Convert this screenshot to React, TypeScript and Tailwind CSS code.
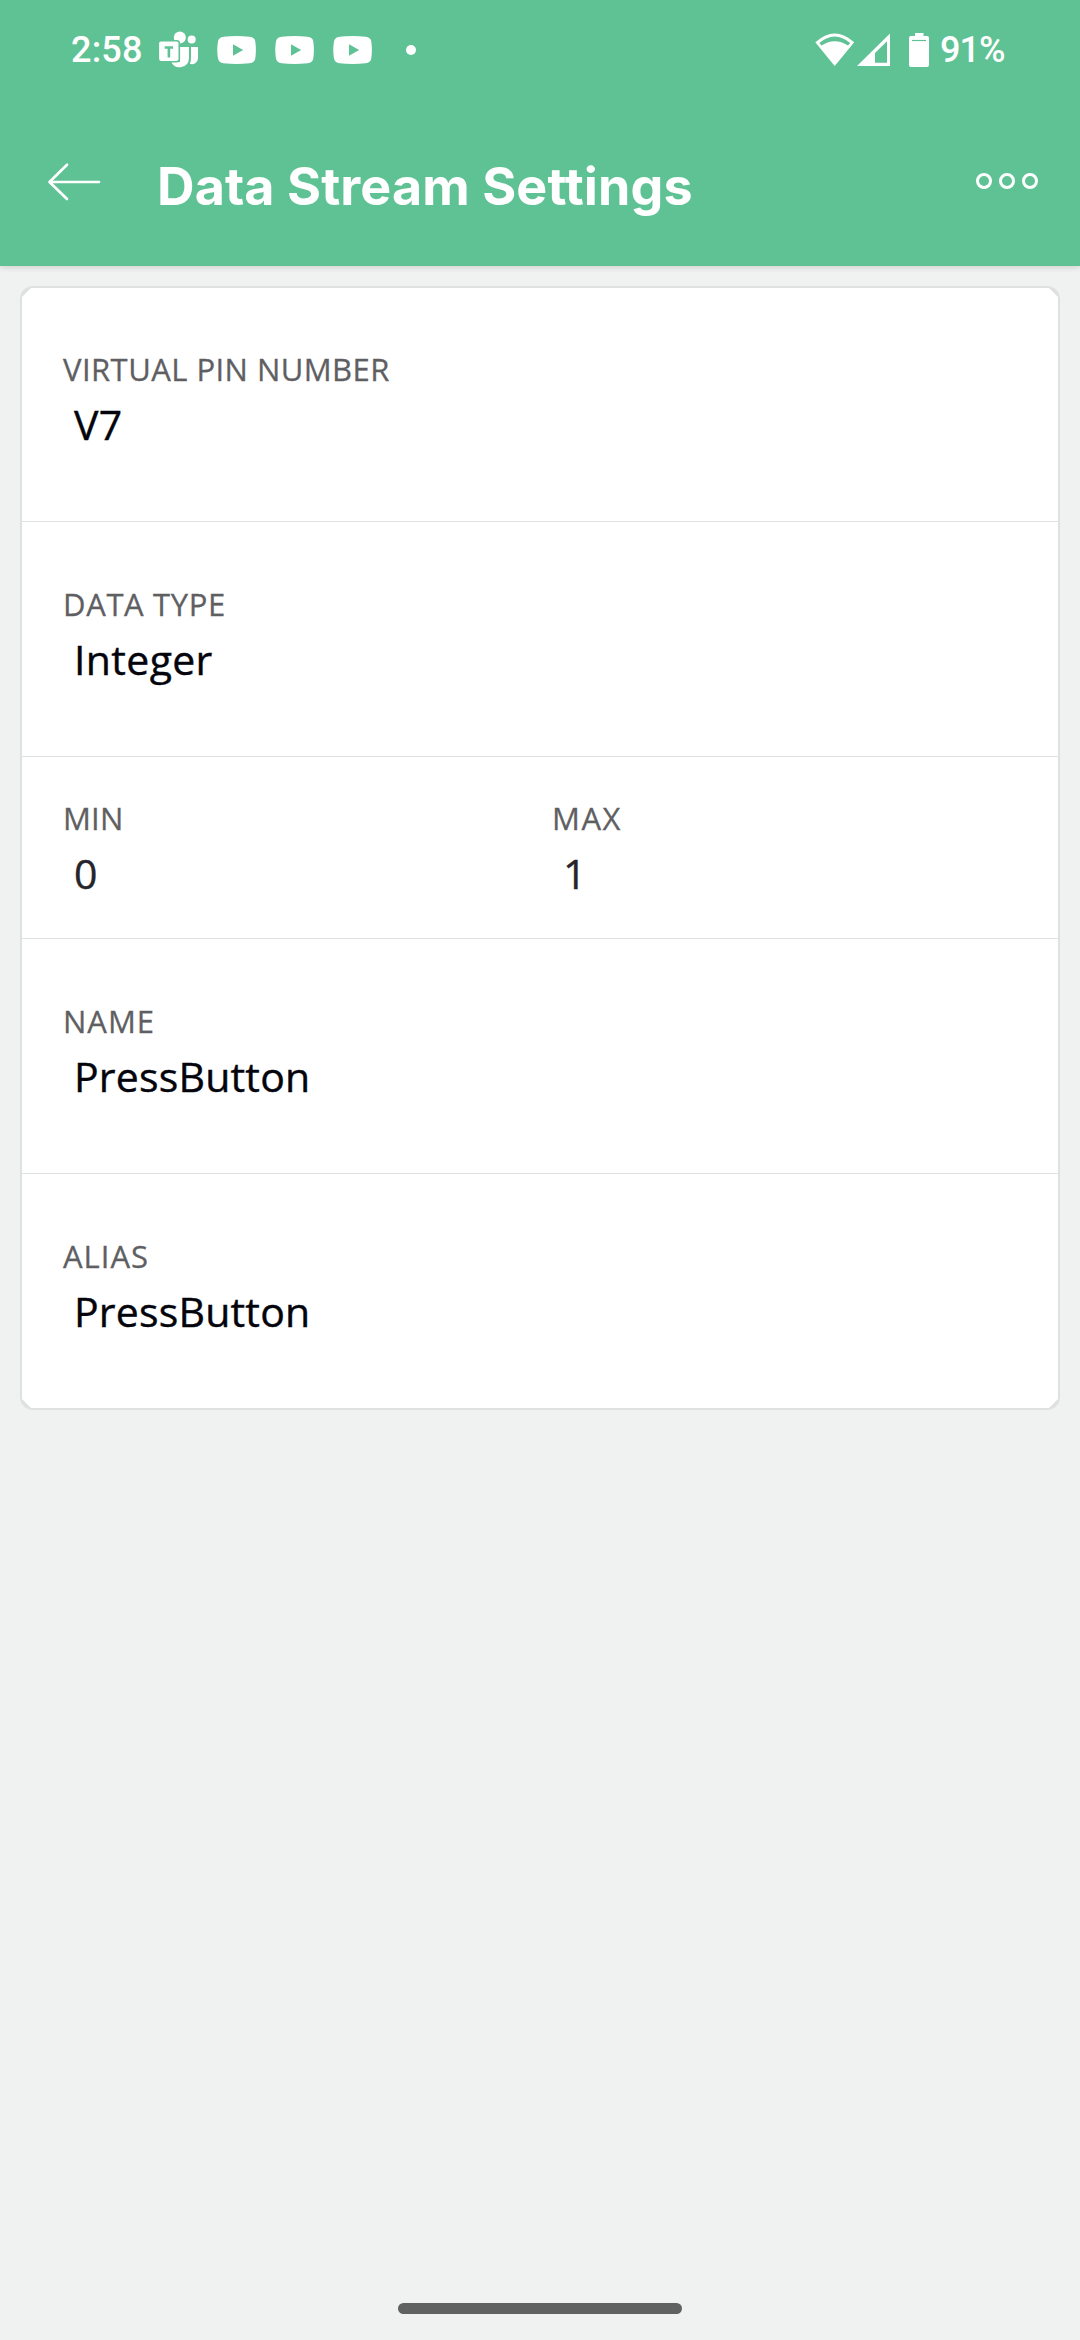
import React from 'react';

type FieldProps = {
  label: string;
  value: string;
  labelSpacing?: string;
  valueSpacing?: string;
  valueColor?: string;
};

function Field({
  label,
  value,
  labelSpacing = 'tracking-normal',
  valueSpacing = 'tracking-[0.35px]',
  valueColor = 'text-[#04040c]',
}: FieldProps) {
  return (
    <div className="flex flex-col">
      <span className={`text-[31px] leading-[40px] text-[#5f5f63] whitespace-nowrap [-webkit-text-stroke:0.3px_currentColor] ${labelSpacing}`}>{label}</span>
      <span className={`mt-[7px] pl-[11px] text-[41px] leading-[56px] whitespace-nowrap [-webkit-text-stroke:0.4px_currentColor] ${valueSpacing} ${valueColor}`}>
        {value}
      </span>
    </div>
  );
}

function TeamsIcon() {
  return (
    <svg width="40" height="40" viewBox="159 30 40 40" fill="#fff">
      <circle cx="179.8" cy="37.4" r="6" />
      <circle cx="191.7" cy="39.6" r="4" />
      <path d="M190.2 47H198v11.5a6 6 0 0 1-8.2 5.2c1-2 1.2-3.8 1.2-5.5V47z" />
      <path d="M180 47h9v11.5a9.4 9.4 0 0 1-17.8 3.5H180z" />
      <rect x="158.300" y="40.7" width="21" height="21" rx="2.6" stroke="#5fc294" strokeWidth="1.6" />
      <path d="M164.7 47.5h8.4M168.9 47.5v10" stroke="#5fc294" strokeWidth="2.6" fill="none" />
    </svg>
  );
}

function VideoIcon() {
  return (
    <svg width="39" height="28" viewBox="0 0 39 28">
      <path
        d="M6.5 .8Q19.5-.7 32.5.8Q37.7 1.3 38.3 5.5Q39.5 14 38.3 22.5Q37.7 26.7 32.5 27.2Q19.5 28.7 6.5 27.2Q1.8 26.7 1 22.5Q-.5 14 1 5.5Q1.8 1.3 6.5.8Z"
        fill="#fff"
      />
      <path d="M16 8.3v11.4l10.2-5.7z" fill="#5fc294" />
    </svg>
  );
}

function StatusBar() {
  return (
    <div className="flex h-[100px] items-center pl-[71px] pr-[74px] text-white">
      <span className="w-[88px] font-['Roboto',sans-serif] text-[36px] font-medium leading-[44px] tracking-[0.2px]">
        2:58
      </span>
      <TeamsIcon />
      <div className="ml-[18px] flex gap-[19px]">
        <VideoIcon />
        <VideoIcon />
        <VideoIcon />
      </div>
      <div className="ml-[34px] size-[10px] rounded-full bg-white" />
      <div className="ml-auto flex items-center">
        <svg width="40" height="34" viewBox="0 0 40 34">
          <path d="M.3 9.3Q19.7-8.3 39.2 9.3L19.7 33Z" fill="#fff" />
          <path d="M4.3 10Q19.7-3 35.2 10L33 12.6Q19.7 3.8 6.5 12.6Z" fill="#5fc294" />
        </svg>
        <svg className="ml-[2px]" width="34" height="34" viewBox="0 0 34 34">
          <path d="M0 33L33 .6V33Z" fill="#fff" />
          <path d="M18 20L30 8.3V29.7H18Z" fill="#5fc294" />
        </svg>
        <svg className="ml-[18px]" width="20" height="34" viewBox="0 0 20 34">
          <path
            d="M6 0h8.5v3H18a2 2 0 0 1 2 2v27a2 2 0 0 1-2 2H2a2 2 0 0 1-2-2V5a2 2 0 0 1 2-2h4z"
            fill="#fff"
          />
          <path d="M3 7.5h14" stroke="#5fc294" strokeWidth="1.2" />
        </svg>
        <span className="ml-[11px] w-[66px] font-['Roboto',sans-serif] text-[36px] font-medium leading-[44px] tracking-[-0.9px]">
          91%
        </span>
      </div>
    </div>
  );
}

function AppBar() {
  return (
    <div className="flex h-[166px] items-start pl-[47px] pr-[42px] pt-[54px] text-white">
      <svg className="mt-[8px]" width="54" height="40" viewBox="0 0 54 40" fill="none" stroke="#fff" strokeWidth="2.7" strokeLinecap="round" strokeLinejoin="round">
        <path d="M52 20H2.5M20 2.7L2.5 20L20 37" />
      </svg>
      <h1 className="ml-[56px] mt-px whitespace-nowrap font-['Inter',sans-serif] text-[52px] font-bold leading-[64px] tracking-[0.1px]">
        Data Stream Settings
      </h1>
      <div className="ml-auto mt-[19px] flex gap-[7px]">
        <span className="size-[16px] rounded-full border-[3px] border-white" />
        <span className="size-[16px] rounded-full border-[3px] border-white" />
        <span className="size-[16px] rounded-full border-[3px] border-white" />
      </div>
    </div>
  );
}

export default function App() {
  return (
    <div className="flex h-[2340px] w-[1080px] flex-col overflow-hidden bg-[#f0f2f1] font-['Open_Sans',sans-serif]">
      <header className="bg-[#5fc294] shadow-[0_1px_6px_rgba(0,0,0,0.16)]">
        <StatusBar />
        <AppBar />
      </header>
      <main className="mx-[20px] mt-[20px] rounded-[13px] bg-[#dfe1e1] p-[2px]">
        <div className="bg-white [clip-path:polygon(9px_0,calc(100%-9px)_0,100%_9px,100%_calc(100%-9px),calc(100%-9px)_100%,9px_100%,0_calc(100%-9px),0_9px)]">
          <section className="h-[234px] border-b border-[#dfe0e0] pl-[41px] pt-[61px]">
            <Field label="VIRTUAL PIN NUMBER" value="V7" labelSpacing="tracking-[0.45px]" />
          </section>
          <section className="h-[235px] border-b border-[#dfe0e0] pl-[41px] pt-[62px]">
            <Field label="DATA TYPE" value="Integer" labelSpacing="tracking-[0.64px]" />
          </section>
          <section className="grid h-[182px] grid-cols-[489px_1fr] border-b border-[#dfe0e0] pl-[41px] pt-[41px]">
            <Field label="MIN" value="0" labelSpacing="tracking-[0.2px]" valueColor="text-[#25252b]" />
            <Field label="MAX" value="1" labelSpacing="tracking-[1.5px]" valueColor="text-[#25252b]" />
          </section>
          <section className="h-[235px] border-b border-[#dfe0e0] pl-[41px] pt-[62px]">
            <Field label="NAME" value="PressButton" labelSpacing="tracking-[1px]" valueSpacing="tracking-[0.2px]" />
          </section>
          <section className="h-[234px] pl-[41px] pt-[62px]">
            <Field label="ALIAS" value="PressButton" labelSpacing="tracking-[1px]" valueSpacing="tracking-[0.2px]" />
          </section>
        </div>
      </main>
      <div className="mx-auto mb-[26px] mt-auto h-[11px] w-[284px] rounded-full bg-[#606261]" />
    </div>
  );
}
